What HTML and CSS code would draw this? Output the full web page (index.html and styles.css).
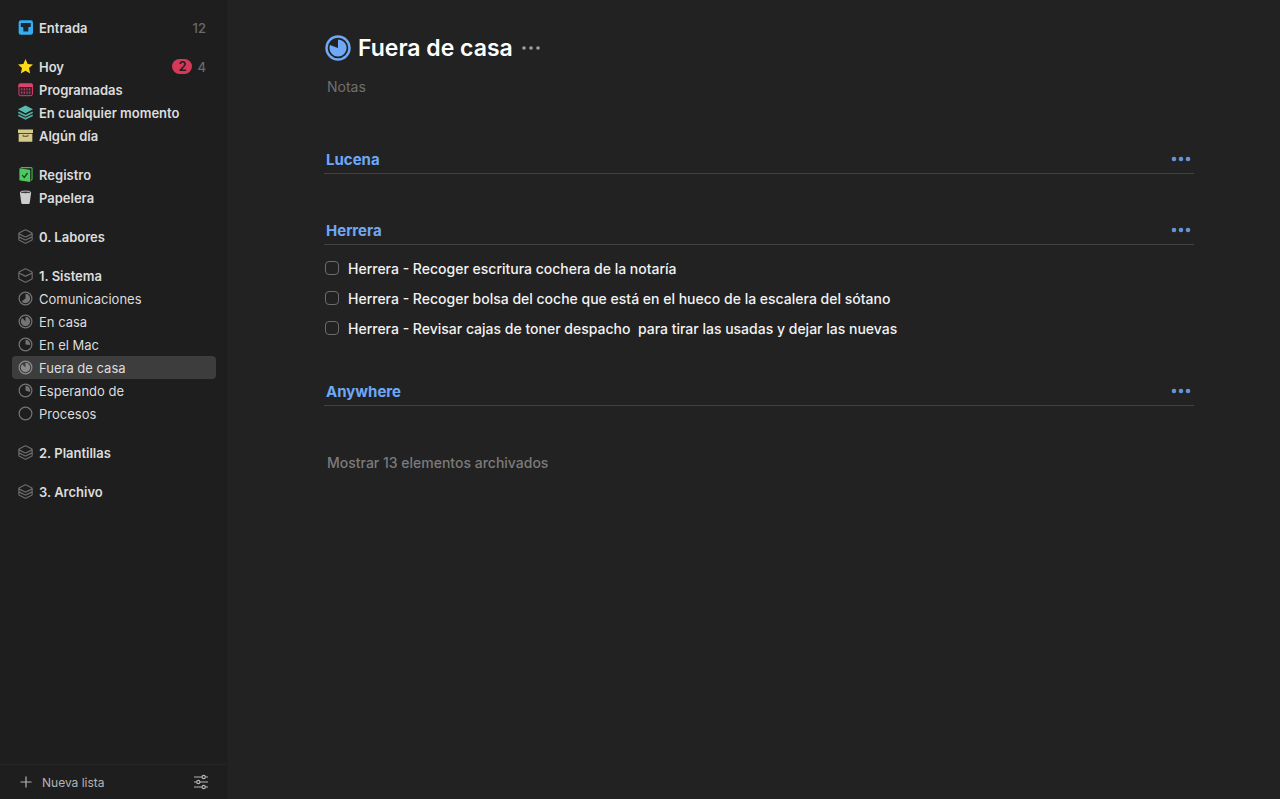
FILE: index.html
```
<!DOCTYPE html>
<html lang="es">

<head>
    <meta charset="utf-8">
    <title>Fuera de casa</title>
    <meta name="viewport" content="width=device-width, initial-scale=1">
    <link rel="stylesheet" href="styles.css">
</head>

<body>
    <!-- shared icons -->
    <svg class="sprite" aria-hidden="true">
        <symbol id="area" viewBox="0 0 16 16">
            <path d="M7.300 1 1.500 3.900Q.9 4.200.9 4.900v6.200q0 .7.600 1L7.300 15q.7.300 1.400 0l5.800-2.900q.6-.3.600-1V4.900q0-.7-.6-1L8.700 1Q8 .7 7.300 1zM1 5.200l6.200 3q.8.400 1.600 0l6.200-3M1 8.400l6.200 3q.8.400 1.600 0l6.200-3" />
        </symbol>
        <symbol id="box" viewBox="0 0 16 16">
            <path d="M7.300 1 1.500 3.900Q.9 4.200.9 4.900v6.200q0 .7.600 1L7.300 15q.7.300 1.400 0l5.800-2.900q.6-.3.600-1V4.900q0-.7-.6-1L8.700 1Q8 .7 7.300 1zM1 5.400l6.200 3q.8.400 1.600 0l6.200-3" />
        </symbol>
        <symbol id="dots" viewBox="0 0 20 6">
            <circle cx="3" cy="3" r="2.300" />
            <circle cx="10" cy="3" r="2.300" />
            <circle cx="17" cy="3" r="2.300" />
        </symbol>
        <symbol id="dots-small" viewBox="0 0 20 6">
            <circle cx="3" cy="3" r="1.800" />
            <circle cx="10" cy="3" r="1.800" />
            <circle cx="17" cy="3" r="1.800" />
        </symbol>
    </svg>

    <div class="app">
        <aside class="sidebar">
            <nav class="lists">
                <div class="group">
                    <a class="item" href="#">
                        <svg class="icon" viewBox="0 0 16 16">
                            <rect x=".7" y=".3" width="15.300" height="15.400" rx="2.500" fill="#35adf0" />
                            <path d="M3 3.200h10.600v4.200h-1.400c-.9 0-1.200.4-1.200 1.200v3.600H5.700V8.600c0-.8-.4-1.200-1.300-1.200H3z" fill="#1b2630" />
                        </svg>
                        <span class="name">Entrada</span>
                        <span class="count">12</span>
                    </a>
                </div>
                <div class="group">
                    <a class="item" href="#">
                        <svg class="icon" viewBox="0 0 16 16">
                            <path d="m8 0 2.300 5.300 5.700.5-4.300 3.900 1.300 5.800-5-3-5 3 1.300-5.800L0 5.800l5.700-.5z" fill="#ffd91a" />
                        </svg>
                        <span class="name">Hoy</span>
                        <span class="badge">2</span>
                        <span class="count">4</span>
                    </a>
                    <a class="item" href="#">
                        <svg class="icon" viewBox="0 0 16 16">
                            <rect x="1" y="2" width="14.400" height="12.600" rx="1.500" fill="#35202a" stroke="#dd416f" />
                            <path d="M.5 3.300c0-1 .6-1.800 1.600-1.800h12.200c1 0 1.600.8 1.600 1.800v1.900H.5z" fill="#dd416f" />
                            <path d="M4 6.700v2.200m2.800-2.200v2.200m2.800-2.200v2.200m2.800-2.200v2.200M4 10v2.400M6.800 10v2.400M9.600 10v2.400m2.800-2.400v2.400" stroke="#b93a60" stroke-width="1.400" />
                        </svg>
                        <span class="name">Programadas</span>
                    </a>
                    <a class="item" href="#">
                        <svg class="icon" viewBox="0 0 16 16">
                            <path d="M8 .5 16 4.600 8 8.700 0 4.600z" fill="#59baae" />
                            <path d="m.3 7.700 7.700 3.900 7.700-3.900M.3 10.900 8 14.800l7.700-3.900" fill="none" stroke="#4fafa3" stroke-width="1.800" />
                        </svg>
                        <span class="name">En cualquier momento</span>
                    </a>
                    <a class="item" href="#">
                        <svg class="icon" viewBox="0 0 16 16">
                            <path d="M0 1.700h16v3.600H0zM.7 6.100h14.600v8.500H.7z" fill="#d3ca8c" />
                            <path d="M5.500 7.300v1.500h5V7.300" fill="none" stroke="#49452e" />
                        </svg>
                        <span class="name">Algún día</span>
                    </a>
                </div>
                <div class="group">
                    <a class="item" href="#">
                        <svg class="icon" viewBox="0 0 16 16">
                            <path d="M3 .7h11c.7 0 1 .3 1 1v11c0 .8-.6 1.300-1.600 1.400" fill="none" stroke="#43b558" stroke-width="1.200" />
                            <path d="M1.500 1.300 12 3c.6.1 1 .5 1 1.100V16L2.500 14.500c-.6-.1-1-.4-1-1z" fill="#4ec962" />
                            <path d="m4.500 8.600 2.200 2.500 3.500-4.700" fill="none" stroke="#17421e" stroke-width="1.400" />
                        </svg>
                        <span class="name">Registro</span>
                    </a>
                    <a class="item" href="#">
                        <svg class="icon" viewBox="0 0 16 16">
                            <path d="m2 2.700 1.500 11c.2.900.6 1.300 1.400 1.300h6.200c.8 0 1.200-.4 1.400-1.300l1.500-11z" fill="#cdcdcf" />
                            <ellipse cx="8" cy="2.500" rx="5.600" ry="1.400" fill="#3b3b3d" stroke="#cdcdcf" />
                        </svg>
                        <span class="name">Papelera</span>
                    </a>
                </div>
                <div class="group">
                    <a class="item" href="#"><svg class="icon line"><use href="#area" /></svg><span class="name">0. Labores</span></a>
                </div>
                <div class="group">
                    <a class="item" href="#"><svg class="icon line"><use href="#box" /></svg><span class="name">1. Sistema</span></a>
                    <a class="item project" href="#">
                        <svg class="icon pie" viewBox="0 0 16 16">
                            <circle class="ring" cx="8" cy="8" r="6.800" />
                            <circle class="slice" cx="8" cy="8" r="2.500" pathLength="100" stroke-dasharray="60 100" />
                        </svg>
                        <span class="name">Comunicaciones</span>
                    </a>
                    <a class="item project" href="#">
                        <svg class="icon pie" viewBox="0 0 16 16">
                            <circle class="ring" cx="8" cy="8" r="6.800" />
                            <circle class="slice" cx="8" cy="8" r="2.500" pathLength="100" stroke-dasharray="82 100" />
                        </svg>
                        <span class="name">En casa</span>
                    </a>
                    <a class="item project" href="#">
                        <svg class="icon pie" viewBox="0 0 16 16">
                            <circle class="ring" cx="8" cy="8" r="6.800" />
                            <circle class="slice" cx="8" cy="8" r="2.500" pathLength="100" stroke-dasharray="25 100" />
                        </svg>
                        <span class="name">En el Mac</span>
                    </a>
                    <a class="item project selected" href="#" aria-current="page">
                        <svg class="icon pie" viewBox="0 0 16 16">
                            <circle class="ring" cx="8" cy="8" r="6.800" />
                            <circle class="slice" cx="8" cy="8" r="2.500" pathLength="100" stroke-dasharray="81 100" />
                        </svg>
                        <span class="name">Fuera de casa</span>
                    </a>
                    <a class="item project" href="#">
                        <svg class="icon pie" viewBox="0 0 16 16">
                            <circle class="ring" cx="8" cy="8" r="6.800" />
                            <circle class="slice" cx="8" cy="8" r="2.500" pathLength="100" stroke-dasharray="28 100" />
                        </svg>
                        <span class="name">Esperando de</span>
                    </a>
                    <a class="item project" href="#">
                        <svg class="icon pie" viewBox="0 0 16 16">
                            <circle class="ring" cx="8" cy="8" r="6.800" />
                        </svg>
                        <span class="name">Procesos</span>
                    </a>
                </div>
                <div class="group">
                    <a class="item" href="#"><svg class="icon line"><use href="#area" /></svg><span class="name">2. Plantillas</span></a>
                </div>
                <div class="group">
                    <a class="item" href="#"><svg class="icon line"><use href="#area" /></svg><span class="name">3. Archivo</span></a>
                </div>
            </nav>

            <div class="toolbar">
                <button type="button" class="new-list">
                    <svg width="12" height="12" viewBox="0 0 12 12"><path d="M6 .5v11M.5 6h11" /></svg>
                    Nueva lista
                </button>
                <button type="button" class="settings" aria-label="Ajustes">
                    <svg width="16" height="16" viewBox="0 0 16 16">
                        <path d="M1 3h8m3.400 0H15M1 8h2.600m3.400 0h8M1 13h8m3.400 0H15" />
                        <circle cx="10.700" cy="3" r="1.600" />
                        <circle cx="5.300" cy="8" r="1.600" />
                        <circle cx="10.700" cy="13" r="1.600" />
                    </svg>
                </button>
            </div>
        </aside>

        <main class="content">
            <header class="title">
                <svg class="progress" viewBox="0 0 26 26">
                    <circle class="ring" cx="13" cy="13" r="11.500" />
                    <circle class="slice" cx="13" cy="13" r="4.300" pathLength="100" stroke-dasharray="81 100" />
                </svg>
                <h1>Fuera de casa</h1>
                <button type="button" class="more" aria-label="Más"><svg><use href="#dots-small" /></svg></button>
            </header>
            <input class="notes" type="text" placeholder="Notas" aria-label="Notas">

            <section class="section">
                <div class="heading">
                    <h2>Lucena</h2>
                    <button type="button" class="more" aria-label="Más"><svg><use href="#dots" /></svg></button>
                </div>
                <div class="tasks"></div>
            </section>

            <section class="section">
                <div class="heading">
                    <h2>Herrera</h2>
                    <button type="button" class="more" aria-label="Más"><svg><use href="#dots" /></svg></button>
                </div>
                <div class="tasks">
                    <label class="task"><input type="checkbox"><span>Herrera - Recoger escritura cochera de la notaría</span></label>
                    <label class="task"><input type="checkbox"><span>Herrera - Recoger bolsa del coche que está en el hueco de la escalera del sótano</span></label>
                    <label class="task"><input type="checkbox"><span>Herrera - Revisar cajas de toner despacho  para tirar las usadas y dejar las nuevas</span></label>
                </div>
            </section>

            <section class="section">
                <div class="heading">
                    <h2>Anywhere</h2>
                    <button type="button" class="more" aria-label="Más"><svg><use href="#dots" /></svg></button>
                </div>
                <div class="tasks"></div>
            </section>

            <button type="button" class="archived">Mostrar 13 elementos archivados</button>
        </main>
    </div>
</body>

</html>
```
FILE: styles.css
```
* {
    box-sizing: border-box;
}

body {
    margin: 0;
    background: #222;
    color: #f2f2f2;
    font-family: Inter, "Liberation Sans", sans-serif;
    font-size: 14px;
}

h1,
h2 {
    margin: 0;
}

button {
    padding: 0;
    border: 0;
    background: none;
    color: inherit;
    font: inherit;
    cursor: pointer;
}

.sprite {
    display: none;
}

.app {
    display: flex;
    min-height: 100vh;
}

/* sidebar */
.sidebar {
    display: flex;
    flex-direction: column;
    flex: 0 0 228px;
    background: #1e1e1e;
    border-right: 1px solid #202020;
}

.lists {
    display: flex;
    flex-direction: column;
    flex: 1;
    gap: 16px;
    padding: 16px 11px 16px 12px;
}

.item {
    display: flex;
    align-items: center;
    height: 23px;
    padding: 0 10px 0 6px;
    border-radius: 4px;
    color: #dcdcdc;
    font-size: 13px;
    font-weight: 600;
    text-decoration: none;
}

.item .name {
    flex: 1;
    margin-left: 6px;
    white-space: nowrap;
}

.project {
    font-weight: 400;
}

.selected {
    background: #3d3d3d;
}

.icon {
    flex: none;
    width: 15px;
    height: 15px;
}

.line {
    fill: none;
    stroke: #6e6e6e;
    stroke-width: 1.2;
}

.ring,
.slice {
    fill: none;
}

.slice {
    transform: rotate(-90deg);
    transform-origin: center;
}

.pie {
    stroke: #747474;
}

.pie .ring {
    stroke-width: 1.3;
}

.pie .slice {
    stroke-width: 5;
}

.selected .pie {
    stroke: #8b8b8b;
}

.count {
    color: #6a6a6a;
    font-weight: 500;
}

.badge {
    width: 20px;
    margin-right: 5px;
    border-radius: 8px;
    background: #d6385a;
    color: #1e1e1e;
    line-height: 15px;
    text-align: center;
}

.toolbar {
    display: flex;
    align-items: center;
    justify-content: space-between;
    height: 35px;
    padding: 0 18px 0 20px;
    border-top: 1px solid #262626;
    color: #b4b4b4;
    font-size: 12px;
}

.toolbar svg {
    fill: none;
    stroke: #b4b4b4;
    stroke-width: 1.2;
}

.new-list {
    display: flex;
    align-items: center;
    gap: 10px;
}

.settings {
    display: flex;
}

/* project */
.content {
    flex: 1;
    min-width: 0;
    padding: 32px 86px 32px 96px;
}

.title {
    display: flex;
    align-items: center;
    height: 32px;
    padding-left: 1px;
}

.title h1 {
    margin: 0 8px 0 7px;
    color: #fff;
    font-size: 23px;
    font-weight: 600;
}

.progress {
    width: 26px;
    height: 26px;
    stroke: #6ea8f7;
}

.progress .ring {
    stroke-width: 2.4;
}

.progress .slice {
    stroke-width: 8.6;
}

.more {
    display: flex;
}

.more svg {
    width: 20px;
    height: 6px;
    fill: #6493d8;
}

.title .more svg {
    fill: #a0a0a0;
}

.notes {
    display: block;
    width: 100%;
    height: 24px;
    margin: 10px 0 47px;
    padding: 0 3px;
    border: 0;
    outline: 0;
    background: none;
    color: #f2f2f2;
    font: inherit;
}

.notes::placeholder {
    color: #707070;
    opacity: 1;
}

.section {
    margin-bottom: 34px;
}

.heading {
    display: flex;
    align-items: center;
    justify-content: space-between;
    height: 29px;
    padding: 0 3px 0 2px;
    border-bottom: 1px solid #424242;
}

.heading h2 {
    color: #6ea8f7;
    font-size: 15px;
    font-weight: 700;
}

.tasks {
    padding-top: 8px;
}

.task {
    display: flex;
    align-items: center;
    gap: 9px;
    height: 30px;
    padding-left: 1px;
    font-weight: 500;
    white-space: pre;
}

.task input {
    appearance: none;
    width: 14px;
    height: 14px;
    margin: 0;
    border: 1px solid #6c6c6c;
    border-radius: 4px;
}

.task input:checked {
    background: #6ea8f7;
}

.archived {
    display: block;
    height: 20px;
    margin: 38px 0 0 3px;
    color: #7b7b7b;
    font-weight: 500;
}
```
